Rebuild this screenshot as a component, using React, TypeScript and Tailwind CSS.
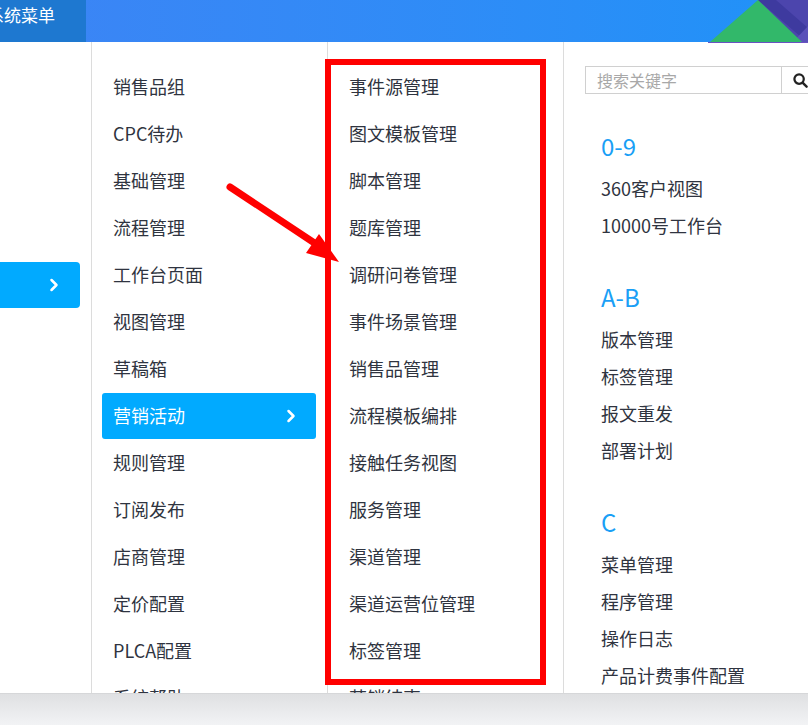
import React from "react";
import { ChevronRight } from "lucide-react";

const font = { fontFamily: '"Noto Sans CJK SC", "Noto Sans", sans-serif' };

const col2 = ["销售品组", "CPC待办", "基础管理", "流程管理", "工作台页面", "视图管理", "草稿箱", "营销活动", "规则管理", "订阅发布", "店商管理", "定价配置", "PLCA配置", "系统帮助"];
const col3 = ["事件源管理", "图文模板管理", "脚本管理", "题库管理", "调研问卷管理", "事件场景管理", "销售品管理", "流程模板编排", "接触任务视图", "服务管理", "渠道管理", "渠道运营位管理", "标签管理", "营销结束"];

const sections: { title: string; items: string[] }[] = [
  { title: "0-9", items: ["360客户视图", "10000号工作台"] },
  { title: "A-B", items: ["版本管理", "标签管理", "报文重发", "部署计划"] },
  { title: "C", items: ["菜单管理", "程序管理", "操作日志", "产品计费事件配置"] },
];

export default function App() {
  return (
    <div className="relative w-[808px] h-[725px] overflow-hidden bg-white text-[#2f3440]" style={font}>
      {/* header */}
      <div className="relative h-[42px] flex bg-gradient-to-r from-[#3c84f5] to-[#1f92f8]">
        <div className="w-[86px] h-full bg-[#1e78d0] overflow-hidden flex items-start">
          <span className="ml-[-13px] mt-[3px] text-white text-[17px] leading-[24px] whitespace-nowrap">系统菜单</span>
        </div>
        <svg className="absolute right-0 top-0" width="100" height="43" viewBox="0 0 100 43">
          <polygon points="50,0 100,0 100,43 50,43" fill="#4c45ad" />
          <polygon points="50,0 68,0 100,28 100,43" fill="#3e3a9f" />
          <polygon points="84,43 100,26 100,43" fill="#5a51b9" />
          <polygon points="2,42 50,0 94,42" fill="#32b86a" />
          <rect x="0" y="42" width="100" height="1" fill="#6a52c2" />
        </svg>
      </div>

      {/* body */}
      <div className="flex h-[651px] overflow-hidden">
        {/* col1 */}
        <div className="w-[92px] shrink-0 border-r border-[#dcdcdc] pt-[220px]">
          <div className="w-[80px] h-[46px] bg-[#01aaff] rounded-r-[4px] flex items-center justify-end pr-[16px]">
            <ChevronRight size={20} strokeWidth={3} className="text-white" />
          </div>
        </div>
        {/* col2 */}
        <div className="w-[236px] shrink-0 border-r border-[#dcdcdc] pt-[21px]">
          {col2.map((t) =>
            t === "营销活动" ? (
              <div key={t} className="h-[47px] py-[0.5px] pl-[10px] pr-[11px]">
                <div className="h-[46px] bg-[#01aaff] rounded-[3px] flex items-center justify-between pl-[11px] pr-[15px] text-white text-[18px]">
                  <span>{t}</span>
                  <ChevronRight size={20} strokeWidth={3} />
                </div>
              </div>
            ) : (
              <div key={t} className="h-[47px] flex items-center pl-[21px] text-[18px] whitespace-nowrap">
                {t}
              </div>
            )
          )}
        </div>
        {/* col3 */}
        <div className="w-[236px] shrink-0 border-r border-[#dcdcdc] pt-[21px]">
          {col3.map((t) => (
            <div key={t} className="h-[47px] flex items-center pl-[21px] text-[18px] whitespace-nowrap">
              {t}
            </div>
          ))}
        </div>
        {/* col4 */}
        <div className="flex-1 pl-[21px] pt-[24px] overflow-hidden">
          <div className="flex h-[28px] w-[260px]">
            <div className="w-[197px] h-full border border-[#d0d0d0] flex items-center pl-[11px] text-[16px] text-[#a8a8a8]">
              搜索关键字
            </div>
            <div className="w-[50px] h-full border border-l-0 border-[#d0d0d0] flex items-center pl-[11px]">
              <svg width="15" height="15" viewBox="0 0 16 16">
                <circle cx="6.5" cy="6.5" r="5" fill="none" stroke="#222" strokeWidth="2.4" />
                <line x1="10.2" y1="10.2" x2="14.5" y2="14.5" stroke="#222" strokeWidth="2.6" strokeLinecap="round" />
              </svg>
            </div>
          </div>
          <div className="pl-[16px]">
            {sections.map((s, i) => (
              <div key={s.title} className={i === 0 ? "pt-[32px]" : "pt-[33px]"}>
                <div className="h-[40px] flex items-center text-[24px] text-[#1a9ff6]">{s.title}</div>
                <div className="mt-[4px]">
                  {s.items.map((it) => (
                    <div key={it} className="h-[37px] flex items-center text-[18px] whitespace-nowrap">
                      {it}
                    </div>
                  ))}
                </div>
              </div>
            ))}
          </div>
        </div>
      </div>

      {/* footer bar */}
      <div className="h-[32px] border-t border-[#d6d7d9] bg-gradient-to-b from-[#dfe0e2] to-[#f2f3f5]" />

      {/* red box */}
      <div className="absolute left-[325px] top-[59px] w-[221px] h-[626px] border-[6px] border-[#ff0000] pointer-events-none" />

      {/* red arrow */}
      <svg className="absolute left-0 top-0 pointer-events-none" width="808" height="725">
        <line x1="230" y1="187" x2="322" y2="248" stroke="#ff0000" strokeWidth="7" strokeLinecap="round" />
        <polygon points="339,262 306,253 319,234" fill="#ff0000" />
      </svg>
    </div>
  );
}
